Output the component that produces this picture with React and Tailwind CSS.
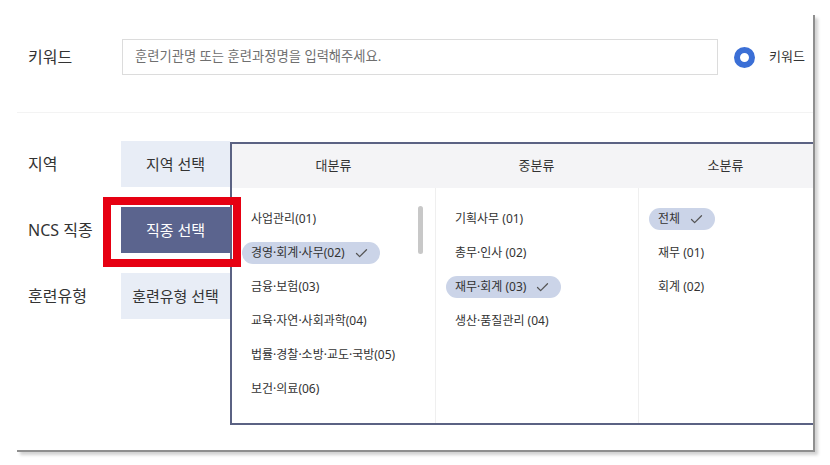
import React from 'react';
import { Check } from 'lucide-react';

const majors = [
  { label: '사업관리(01)' },
  { label: '경영·회계·사무(02)', on: true },
  { label: '금융·보험(03)' },
  { label: '교육·자연·사회과학(04)' },
  { label: '법률·경찰·소방·교도·국방(05)' },
  { label: '보건·의료(06)' },
];

const middles = [
  { label: '기획사무 (01)' },
  { label: '총무·인사 (02)' },
  { label: '재무·회계 (03)', on: true },
  { label: '생산·품질관리 (04)' },
];

const smalls = [
  { label: '전체', on: true },
  { label: '재무 (01)' },
  { label: '회계 (02)' },
];

const Item = ({ label, on }) => (
  <div className="h-[34px] flex items-center">
    <span
      className={
        'ml-[10px] h-[22px] pl-[9px] pr-[11px] inline-flex items-center gap-[9px] rounded-full text-[12px] text-[#333] whitespace-nowrap ' +
        (on ? 'bg-[#cbd4e8]' : '')
      }
    >
      {label}
      {on && <Check size={15} strokeWidth={2} className="text-[#555]" />}
    </span>
  </div>
);

const FilterRow = ({ label, button, active }) => (
  <div className="h-[46px] flex items-center">
    <div className="w-[93px] text-[16px] text-[#333]">{label}</div>
    <div
      className={
        'w-[109px] h-full flex items-center justify-center text-[15px] ' +
        (active ? 'bg-[#5b648e] text-white' : 'bg-[#e8edf6] text-[#333]')
      }
    >
      {button}
    </div>
  </div>
);

export default function App() {
  return (
    <div className="w-[830px] h-[465px] bg-white relative overflow-hidden font-['Noto_Sans','Noto_Sans_CJK_KR',sans-serif]">
      <div className="ml-[17px] mt-[15px] w-[798px] h-[437px] border-r-2 border-b-2 border-[#8f8f8f] shadow-[3px_3px_3px_rgba(0,0,0,0.18)] flex flex-col">
        {/* keyword row */}
        <div className="h-[98px] pt-[24px] pl-[11px] flex items-start border-b border-[#f3f3f3]">
          <div className="h-[36px] w-[94px] flex items-center text-[16px] text-[#333]">키워드</div>
          <div className="h-[36px] w-[596px] border border-[#dcdcdc] flex items-center px-[12px] text-[13.3px] text-[#6f6f6f]">
            훈련기관명 또는 훈련과정명을 입력해주세요.
          </div>
          <div className="h-[36px] ml-[16px] flex items-center gap-[14px]">
            <span className="w-[21px] h-[21px] rounded-full border-[6px] border-[#3b6fd6] bg-white" />
            <span className="text-[13px] text-[#333]">키워드</span>
          </div>
        </div>

        {/* filter section */}
        <div className="flex pt-[28px]">
          <div className="w-[213px] pl-[11px] flex flex-col gap-[20px]">
            <FilterRow label="지역" button="지역 선택" />
            <FilterRow label="NCS 직종" button="직종 선택" active />
            <FilterRow label="훈련유형" button="훈련유형 선택" />
          </div>

          <div className="mt-[1px] w-[583px] h-[283px] border-l-2 border-t-2 border-b-2 border-[#5b6283] flex flex-col">
            <div className="h-[44px] bg-[#f4f4f6] grid grid-cols-[203px_203px_1fr] text-[13px] text-[#333]">
              <div className="flex items-center justify-center">대분류</div>
              <div className="flex items-center justify-center">중분류</div>
              <div className="flex items-center justify-center">소분류</div>
            </div>
            <div className="flex-1 grid grid-cols-[203px_203px_1fr]">
              <div className="relative pt-[14px]">
                {majors.map((m) => (
                  <Item key={m.label} {...m} />
                ))}
                <div className="absolute right-[12px] top-[18px] w-[5px] h-[48px] rounded-full bg-[#c8c8c8]" />
              </div>
              <div className="pt-[14px] border-l border-[#efefef]">
                {middles.map((m) => (
                  <Item key={m.label} {...m} />
                ))}
              </div>
              <div className="pt-[14px] border-l border-[#efefef]">
                {smalls.map((m) => (
                  <Item key={m.label} {...m} />
                ))}
              </div>
            </div>
          </div>
        </div>
      </div>

      {/* highlight annotation */}
      <div className="absolute left-[103px] top-[197px] w-[138px] h-[70px] border-[8px] border-[#e60012] pointer-events-none" />
    </div>
  );
}
